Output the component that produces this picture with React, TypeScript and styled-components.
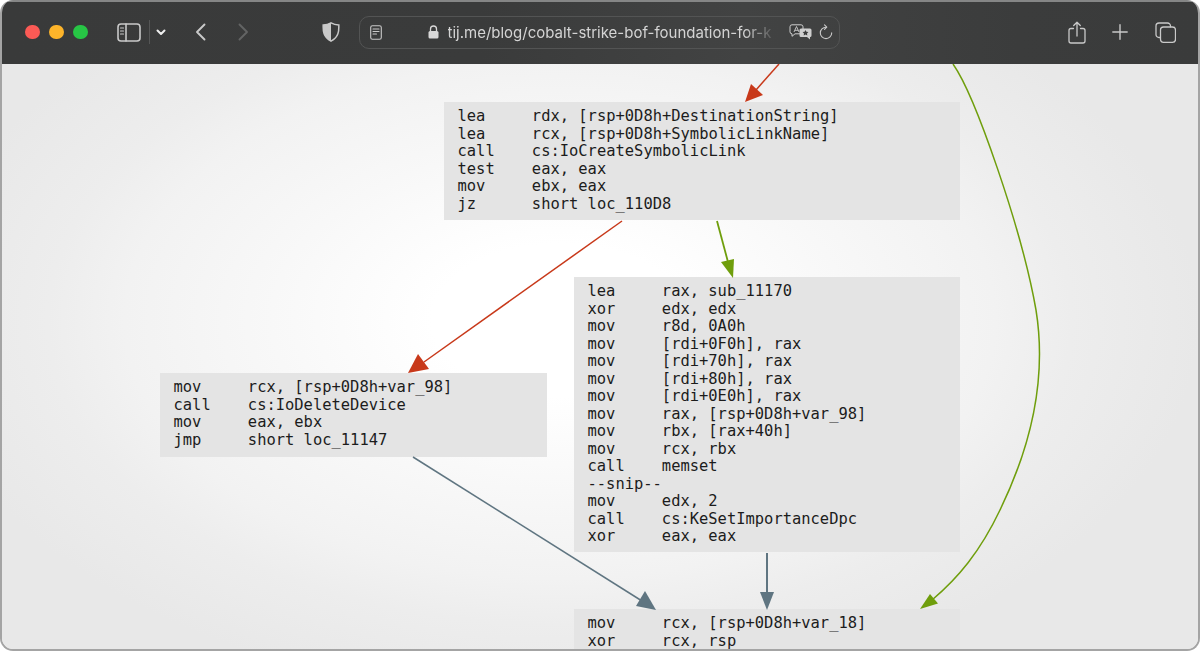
import React from "react";
import styled, { createGlobalStyle } from "styled-components";

const Global = createGlobalStyle`
  html, body { margin: 0; padding: 0; background: #fff; }
  body { width: 1200px; height: 651px; overflow: hidden; }
`;

const Win = styled.div`
  width: 1200px; height: 651px; box-sizing: border-box;
  border: 2px solid #a4a4a4; border-top: none; border-radius: 13px;
  overflow: hidden; display: flex; flex-direction: column; background: #f0f0f0;
`;

const Toolbar = styled.header`
  height: 64px; flex: none; box-sizing: border-box; display: flex; align-items: center;
  padding: 0 0 2px 23px; border-top: 2px solid #858686;
  background: linear-gradient(90deg, #393a3a 0%, #3a3b3b 40%, #424343 62%, #3b3c3c 85%, #3a3b3b 100%);
  color: #cfcfcf;
`;

const Lights = styled.div`display: flex; gap: 9.5px; margin-right: 29.5px;`;
const Light = styled.span<{ $c: string }>`
  width: 14.5px; height: 14.5px; border-radius: 50%; background: ${p => p.$c};
`;
const Tool = styled.span<{ $ml?: number; $w: number }>`
  display: flex; align-items: center; justify-content: center; flex: none;
  width: ${p => p.$w}px; margin-left: ${p => p.$ml ?? 0}px;
  svg { display: block; }
`;
const Sep = styled.span`width: 1px; height: 24px; background: #555656; margin-left: 7.5px; flex: none;`;

const UrlBar = styled.div`
  position: relative; flex: none; margin-left: 19px; width: 481px; height: 33px; box-sizing: border-box;
  border: 1px solid #535454; border-radius: 10px; display: flex; align-items: center; padding-left: 10px;
`;
const Url = styled.span`
  font: 400 15px "Inter", "Liberation Sans", sans-serif; color: #d4d4d4; white-space: nowrap;
  width: 329px; margin-left: 9px; flex: none;
  -webkit-mask-image: linear-gradient(90deg, #000 90%, transparent 100%);
  mask-image: linear-gradient(90deg, #000 90%, transparent 100%);
`;

const Canvas = styled.main`
  position: relative; flex: 1; overflow: hidden;
  background: radial-gradient(ellipse 640px 380px at 558px 256px, #ffffff 0%, #ffffff 20%, #f8f8f8 45%, #f2f2f2 68%, #ededed 80%, #e8e8e8 100%);
`;
const Node = styled.pre<{ $x: number; $y: number; $w: number; $h: number }>`
  position: absolute; margin: 0; box-sizing: border-box;
  left: ${p => p.$x - 2}px; top: ${p => p.$y - 64}px; width: ${p => p.$w}px; height: ${p => p.$h}px;
  padding: 6px 0 0 14px; background: #e4e4e4; color: #1c1c1c;
  font: 400 15.45px/17.5px "DejaVu Sans Mono", monospace;
`;
const Edges = styled.svg`position: absolute; left: -2px; top: -64px; width: 1200px; height: 651px; pointer-events: none;`;

const RED = "#c8391a", GREEN = "#6f9e0c", SLATE = "#5f7581";

const A = `lea     rdx, [rsp+0D8h+DestinationString]
lea     rcx, [rsp+0D8h+SymbolicLinkName]
call    cs:IoCreateSymbolicLink
test    eax, eax
mov     ebx, eax
jz      short loc_110D8`;
const B = `lea     rax, sub_11170
xor     edx, edx
mov     r8d, 0A0h
mov     [rdi+0F0h], rax
mov     [rdi+70h], rax
mov     [rdi+80h], rax
mov     [rdi+0E0h], rax
mov     rax, [rsp+0D8h+var_98]
mov     rbx, [rax+40h]
mov     rcx, rbx
call    memset
--snip--
mov     edx, 2
call    cs:KeSetImportanceDpc
xor     eax, eax`;
const C = `mov     rcx, [rsp+0D8h+var_98]
call    cs:IoDeleteDevice
mov     eax, ebx
jmp     short loc_11147`;
const D = `mov     rcx, [rsp+0D8h+var_18]
xor     rcx, rsp`;

const stroke = { fill: "none", stroke: "#c9c9c9", strokeWidth: 1.6, strokeLinecap: "round" as const, strokeLinejoin: "round" as const };

export default function App() {
  return (
    <>
      <Global />
      <Win>
        <Toolbar>
          <Lights>
            <Light $c="#fb5a55" />
            <Light $c="#fdb42a" />
            <Light $c="#27c545" />
          </Lights>
          <Tool $w={24}>
            <svg width="24" height="19" viewBox="0 0 24 19" {...stroke}>
              <rect x="1" y="1" width="22" height="17" rx="3" />
              <path d="M9 1v17" />
              <path d="M3.5 5h3M3.5 8h3M3.5 11h3" strokeWidth="1.2" />
            </svg>
          </Tool>
          <Sep />
          <Tool $w={10} $ml={6}>
            <svg width="10" height="7" viewBox="0 0 10 7" fill="none" stroke="#eee" strokeWidth="2" strokeLinecap="round" strokeLinejoin="round">
              <path d="M1.5 1.5 5 5l3.5-3.5" />
            </svg>
          </Tool>
          <Tool $w={11} $ml={29}>
            <svg width="11" height="18" viewBox="0 0 11 18" {...stroke} strokeWidth={1.9}>
              <path d="M9.5 1.5 2 9l7.5 7.5" />
            </svg>
          </Tool>
          <Tool $w={11} $ml={32}>
            <svg width="11" height="18" viewBox="0 0 11 18" {...stroke} stroke="#636464" strokeWidth={1.9}>
              <path d="M1.5 1.5 9 9l-7.5 7.5" />
            </svg>
          </Tool>
          <Tool $w={18} $ml={73}>
            <svg width="18" height="20" viewBox="0 0 18 20">
              <path d="M9 .8C6.5 2.2 4 2.8 1.2 3c-.2 6 0 12 7.8 16.2C16.8 15 17 9 16.800 3 14 2.800 11.500 2.200 9 .8Z" fill="none" stroke="#c9c9c9" strokeWidth="1.500" />
              <path d="M9 .8C6.500 2.200 4 2.800 1.200 3c-.2 6 0 12 7.800 16.200Z" fill="#c9c9c9" />
            </svg>
          </Tool>
          <UrlBar>
            <Tool $w={12}>
              <svg width="12" height="15" viewBox="0 0 12 15" {...stroke} strokeWidth={1.1}>
                <rect x=".7" y=".7" width="10.600" height="13.600" rx="1.800" />
                <path d="M3 4h6M3 6.500h6M3 9h3.500" />
              </svg>
            </Tool>
            <Tool $w={11} $ml={46}>
              <svg width="11" height="14" viewBox="0 0 11 14">
                <path d="M2.500 6V4a3 3 0 0 1 6 0v2" fill="none" stroke="#d8d8d8" strokeWidth="1.300" />
                <rect x=".5" y="6" width="10" height="7.500" rx="1.500" fill="#d8d8d8" />
              </svg>
            </Tool>
            <Url>tij.me/blog/cobalt-strike-bof-foundation-for-k</Url>
            <Tool $w={23} $ml={12}>
              <svg width="23" height="16" viewBox="0 0 23 16">
                <path d="M3 .8h9a2 2 0 0 1 2 2v5a2 2 0 0 1-2 2H6l-3 2.500v-2.500a2 2 0 0 1-2-2v-5a2 2 0 0 1 2-2Z" fill="#3c3d3d" stroke="#cfcfcf" strokeWidth="1" />
                <path d="M5 8l2.500-5.500L10 8M5.800 6.300h3.400" fill="none" stroke="#cfcfcf" strokeWidth=".9" />
                <path d="M12 4.500h9a1.500 1.500 0 0 1 1.500 1.500v5.500a1.500 1.500 0 0 1-1.500 1.500v2.500L18 13h-6a1.500 1.500 0 0 1-1.500-1.500V6A1.500 1.500 0 0 1 12 4.500Z" fill="#cfcfcf" />
                <path d="m16.500 6 .9 1.800 2 .3-1.400 1.400.3 2-1.800-.9-1.800.9.3-2-1.400-1.400 2-.3Z" fill="#3c3d3d" />
              </svg>
            </Tool>
            <Tool $w={14} $ml={7}>
              <svg width="14" height="16" viewBox="0 0 14 16" {...stroke} strokeWidth={1.100}>
                <path d="M7 3.200a5.700 5.700 0 1 0 5.700 5.700" />
                <path d="M5.500.8 7.800 3.200 5.500 5.400" />
              </svg>
            </Tool>
          </UrlBar>
          <Tool $w={18} $ml={228}>
            <svg width="18" height="23" viewBox="0 0 18 23" {...stroke} strokeWidth={1.300}>
              <path d="M5.500 7.500H3a2 2 0 0 0-2 2v10.500a2 2 0 0 0 2 2h12a2 2 0 0 0 2-2V9.500a2 2 0 0 0-2-2h-2.500" />
              <path d="M9 15V1.500M5.700 4.500 9 1.200l3.300 3.300" />
            </svg>
          </Tool>
          <Tool $w={16} $ml={26}>
            <svg width="16" height="16" viewBox="0 0 16 16" {...stroke} strokeWidth={1.400}>
              <path d="M8 .8v14.400M.8 8h14.400" />
            </svg>
          </Tool>
          <Tool $w={21} $ml={27}>
            <svg width="21" height="21" viewBox="0 0 21 21" {...stroke} strokeWidth={1.300}>
              <path d="M4.700 15.500H4a3 3 0 0 1-3-3V4a3 3 0 0 1 3-3h8.500a3 3 0 0 1 3 3v.8" />
              <rect x="5.500" y="5" width="15" height="15.300" rx="3" />
            </svg>
          </Tool>
        </Toolbar>
        <Canvas>
          <Node $x={443.5} $y={102} $w={516.5} $h={118}>{A}</Node>
          <Node $x={573.5} $y={277} $w={386.5} $h={275}>{B}</Node>
          <Node $x={159.5} $y={373} $w={387.5} $h={84}>{C}</Node>
          <Node $x={573.5} $y={609} $w={386.5} $h={60}>{D}</Node>
          <Edges viewBox="0 0 1200 651">
            <path d="M779 64 756 90" stroke={RED} strokeWidth="1.500" fill="none" />
            <polygon points="745,102 751,84 763,95" fill={RED} />
            <path d="M622 221 424 362" stroke={RED} strokeWidth="1.500" fill="none" />
            <polygon points="408,373 418,354 429,369" fill={RED} />
            <path d="M717 221 728 262" stroke={GREEN} strokeWidth="1.800" fill="none" />
            <polygon points="733,278 721,262 734,259" fill={GREEN} />
            <path d="M953 64C975 95 1022 230 1036 310C1046 372 1034 440 1000 510C980 552 958 578 932 600" stroke={GREEN} strokeWidth="1.500" fill="none" />
            <polygon points="920,609 930,594 938,603.500" fill={GREEN} />
            <path d="M413 457 642 601" stroke={SLATE} strokeWidth="1.500" fill="none" />
            <polygon points="656,610 636,606 645,591" fill={SLATE} />
            <path d="M767 553V594" stroke={SLATE} strokeWidth="2" fill="none" />
            <polygon points="767,610 760,592 774,592" fill={SLATE} />
          </Edges>
        </Canvas>
      </Win>
    </>
  );
}
